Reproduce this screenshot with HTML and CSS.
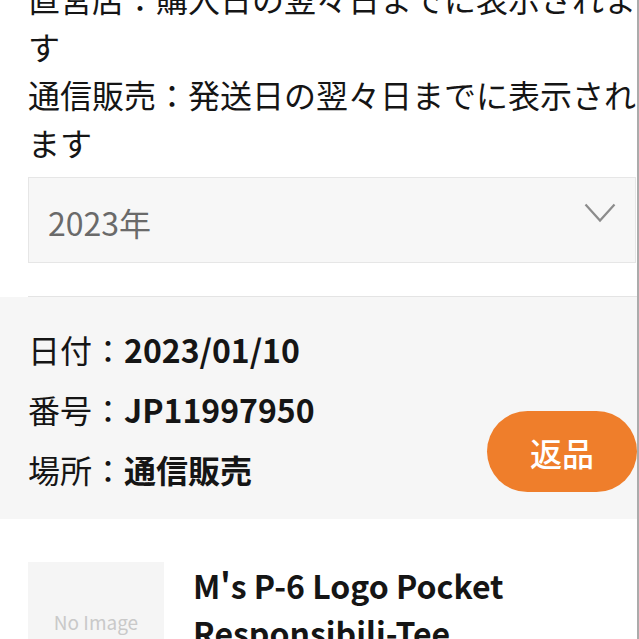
FILE: index.html
```html
<!DOCTYPE html>
<html lang="ja">
<head>
<meta charset="utf-8">
<title>購入履歴</title>
<link rel="stylesheet" href="styles.css">
</head>
<body>
<div class="page">
  <div class="notes">
    <p>直営店：購入日の翌々日までに表示されます</p>
    <p>通信販売：発送日の翌々日までに表示されます</p>
  </div>
  <div class="select">
    <span class="select-value">2023年</span>
    <svg class="chevron" width="32" height="20" viewBox="0 0 32 20"><polyline points="1.5,1.5 16,17.5 30.5,1.5" fill="none" stroke="#8c8c8c" stroke-width="2.2"/></svg>
  </div>
  <div class="divider"></div>
  <section class="order">
    <div class="info">
      <div class="row"><span class="label">日付：</span><span class="value">2023/01/10</span></div>
      <div class="row"><span class="label">番号：</span><span class="value">JP11997950</span></div>
      <div class="row"><span class="label">場所：</span><span class="value">通信販売</span></div>
    </div>
    <button class="return">返品</button>
  </section>
  <div class="product">
    <div class="thumb">No Image</div>
    <h2 class="title">M's P-6 Logo Pocket Responsibili-Tee</h2>
  </div>
</div>
</body>
</html>
```
FILE: styles.css
```css
html, body {
  margin: 0;
  padding: 0;
  background: #fff;
}
body {
  font-family: "Noto Sans CJK JP", "Noto Sans", sans-serif;
  color: #151515;
  font-size: 32px;
  overflow: hidden;
}
.page {
  width: 609px;
  padding-left: 28px;
  border-right: 2px solid #ababab;
  min-height: 760px;
}
.notes {
  margin-top: -26px;
  line-height: 48px;
}
.notes p {
  margin: 0;
}
.select {
  margin-top: 11px;
  margin-right: 1px;
  height: 84px;
  border: 1px solid #e6e6e6;
  background: #f7f7f7;
  display: flex;
  justify-content: space-between;
  align-items: flex-start;
}
.select-value {
  color: #6a6a6a;
  line-height: 84px;
  padding-left: 19px;
  padding-top: 2px;
}
.chevron {
  margin-top: 25px;
  margin-right: 19px;
}
.divider {
  margin-top: 33px;
  height: 1px;
  background: #e4e4e4;
}
.order {
  margin-left: -28px;
  background: #f6f6f6;
  padding: 22px 0 20px 28px;
  display: flex;
  justify-content: space-between;
}
.row {
  line-height: 60px;
  height: 60px;
}
.value {
  font-weight: 700;
}
.return {
  align-self: flex-end;
  margin-bottom: 7px;
  width: 150px;
  height: 81px;
  border: none;
  border-radius: 41px;
  background: #ef7e2b;
  color: #fff;
  font-family: inherit;
  font-size: 32px;
  font-weight: 500;
  padding: 0;
}
.product {
  margin-top: 43px;
  display: flex;
  align-items: flex-start;
}
.thumb {
  flex: none;
  width: 136px;
  height: 136px;
  background: #f5f5f5;
  color: #c9c9c9;
  font-size: 19px;
  display: flex;
  align-items: center;
  justify-content: center;
  padding-bottom: 18px;
  box-sizing: border-box;
}
.title {
  margin: 0 0 0 29px;
  font-size: 32px;
  font-weight: 700;
  line-height: 47px;
}
```
